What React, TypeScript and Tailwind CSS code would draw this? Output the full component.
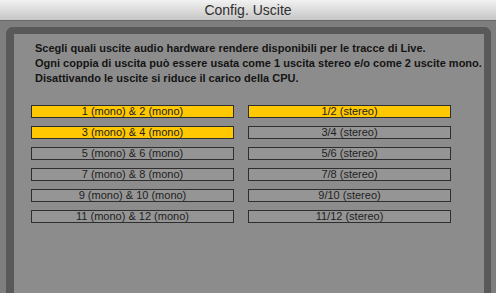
import { Fragment } from 'react'

const rows = [
  { mono: '1 (mono) & 2 (mono)', stereo: '1/2 (stereo)', monoOn: true, stereoOn: true },
  { mono: '3 (mono) & 4 (mono)', stereo: '3/4 (stereo)', monoOn: true, stereoOn: false },
  { mono: '5 (mono) & 6 (mono)', stereo: '5/6 (stereo)', monoOn: false, stereoOn: false },
  { mono: '7 (mono) & 8 (mono)', stereo: '7/8 (stereo)', monoOn: false, stereoOn: false },
  { mono: '9 (mono) & 10 (mono)', stereo: '9/10 (stereo)', monoOn: false, stereoOn: false },
  { mono: '11 (mono) & 12 (mono)', stereo: '11/12 (stereo)', monoOn: false, stereoOn: false },
]

function Toggle({ label, on }: { label: string; on: boolean }) {
  return (
    <button
      className={
        'flex h-[13px] items-center justify-center border border-[#2e2e2e] text-[11px] leading-none text-[#1e1e1e] ' +
        (on ? 'bg-[#ffc800]' : 'bg-[#959595]')
      }
    >
      {label}
    </button>
  )
}

export default function App() {
  return (
    <div className="flex h-[293px] w-[496px] flex-col overflow-hidden bg-[#7e7e7e] font-['Liberation_Sans',Arial,sans-serif]">
      <div className="flex h-[21px] shrink-0 items-center justify-center border-b border-[#6a6a6a] bg-gradient-to-b from-[#f2f2f2] to-[#c6c6c6] text-[14px] text-[#2f2f2f]">
        Config. Uscite
      </div>

      <div className="flex-1 pl-[6px] pr-[5px] pt-[6px]">
        <div className="h-[300px] rounded-t-[7px] border-l-[8px] border-r-[7px] border-t-[7px] border-[#595959] bg-[#8c8c8c]">
          <div className="whitespace-nowrap pl-[21px] pt-[7px] text-[11px] font-bold leading-[15px] text-[#141414]">
            <p>Scegli quali uscite audio hardware rendere disponibili per le tracce di Live.</p>
            <p>Ogni coppia di uscita può essere usata come 1 uscita stereo e/o come 2 uscite mono.</p>
            <p>Disattivando le uscite si riduce il carico della CPU.</p>
          </div>

          <div className="ml-[17px] mt-[19px] grid grid-cols-[203px_203px] gap-x-[14px] gap-y-[8px]">
            {rows.map((r) => (
              <Fragment key={r.mono}>
                <Toggle label={r.mono} on={r.monoOn} />
                <Toggle label={r.stereo} on={r.stereoOn} />
              </Fragment>
            ))}
          </div>
        </div>
      </div>
    </div>
  )
}
